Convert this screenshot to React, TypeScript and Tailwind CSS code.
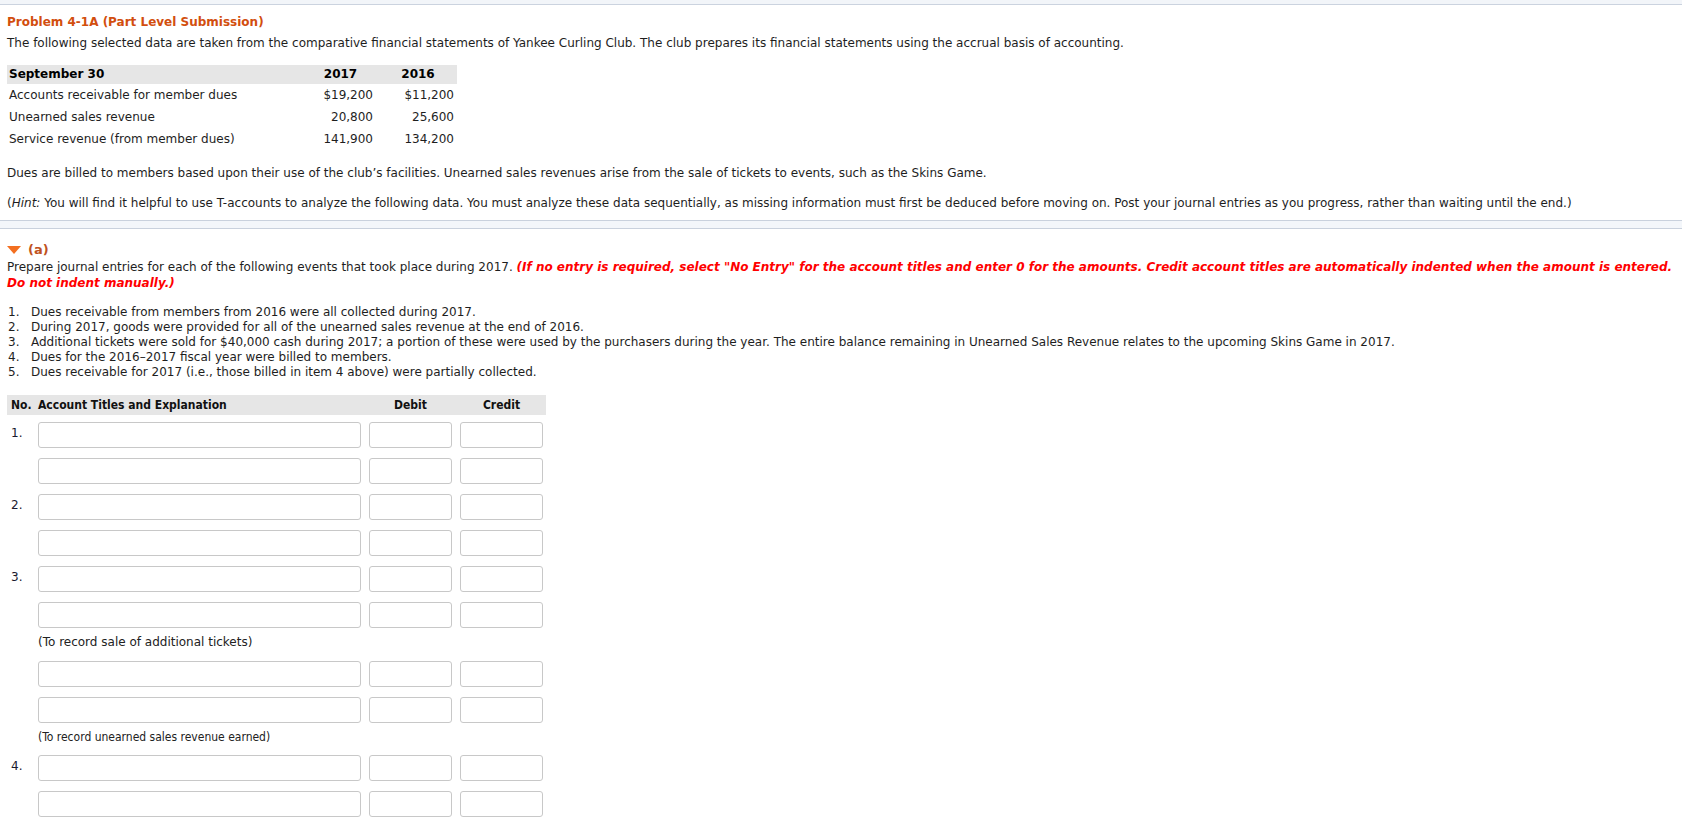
import React from "react";

const font = { fontFamily: '"DejaVu Sans", Verdana, sans-serif' };
const cond = { fontFamily: '"DejaVu Sans Condensed", "DejaVu Sans", sans-serif' };

function Row({ num }: { num?: string }) {
  return (
    <div className="flex h-[26px]">
      <div className="w-[31px] pl-[4px] pt-[3px] leading-[16px] text-[12px] text-[#1a1a2e]">{num}</div>
      <input className="w-[323px] h-[26px] border border-[#c8c8c8] rounded-[3px] bg-white outline-none" />
      <input className="ml-[8px] w-[83px] h-[26px] border border-[#c8c8c8] rounded-[3px] bg-white outline-none" />
      <input className="ml-[8px] w-[83px] h-[26px] border border-[#c8c8c8] rounded-[3px] bg-white outline-none" />
    </div>
  );
}

function Label({ children }: { children: React.ReactNode }) {
  return (
    <div className="pl-[31px] leading-[16px] text-[12px] text-[#222]">{children}</div>
  );
}

export default function App() {
  const data = [
    ["Accounts receivable for member dues", "$19,200", "$11,200"],
    ["Unearned sales revenue", "20,800", "25,600"],
    ["Service revenue (from member dues)", "141,900", "134,200"],
  ];
  const items = [
    "Dues receivable from members from 2016 were all collected during 2017.",
    "During 2017, goods were provided for all of the unearned sales revenue at the end of 2016.",
    "Additional tickets were sold for $40,000 cash during 2017; a portion of these were used by the purchasers during the year. The entire balance remaining in Unearned Sales Revenue relates to the upcoming Skins Game in 2017.",
    "Dues for the 2016\u20132017 fiscal year were billed to members.",
    "Dues receivable for 2017 (i.e., those billed in item 4 above) were partially collected.",
  ];
  return (
    <div className="bg-white min-h-screen text-[12px] text-[#1e1e1e]" style={font}>
      <div className="h-[5px] bg-[#f2f5f9] border-b border-[#cbd3df]" />
      <div className="px-[7px]">
        <div className="mt-[9px] leading-[16px] font-bold text-[#d24e0e]">
          Problem 4-1A (Part Level Submission)
        </div>
        <div className="mt-[5px] leading-[16px]">
          The following selected data are taken from the comparative financial statements of Yankee Curling Club. The club prepares its financial statements using the accrual basis of accounting.
        </div>
        <div className="mt-[14px] w-[450px]">
          <div className="grid grid-cols-[295px_77px_78px] h-[19px] bg-[#e6e6e6] font-bold text-[#000] leading-[19px]">
            <div className="pl-[2px]">September 30</div>
            <div className="text-center">2017</div>
            <div className="text-center">2016</div>
          </div>
          {data.map((r) => (
            <div key={r[0]} className="grid grid-cols-[295px_77px_78px] h-[22px] leading-[22px]">
              <div className="pl-[2px]">{r[0]}</div>
              <div className="text-right pr-[6px]">{r[1]}</div>
              <div className="text-right pr-[3px]">{r[2]}</div>
            </div>
          ))}
        </div>
        <div className="mt-[15px] leading-[16px]">
          Dues are billed to members based upon their use of the club’s facilities. Unearned sales revenues arise from the sale of tickets to events, such as the Skins Game.
        </div>
        <div className="mt-[14px] leading-[16px]">
          (<i>Hint:</i> You will find it helpful to use T-accounts to analyze the following data. You must analyze these data sequentially, as missing information must first be deduced before moving on. Post your journal entries as you progress, rather than waiting until the end.)
        </div>
      </div>
      <div className="mt-[9px] h-[9px] bg-[#f3f6fa] border-y border-[#c9d1dd]" />
      <div className="px-[7px]">
        <div className="mt-[13px] flex items-center h-[16px] leading-[16px]">
          <svg width="14" height="8" viewBox="0 0 14 8" className="mr-[7px]">
            <polygon points="0,0 14,0 7,8" fill="#f36f21" />
          </svg>
          <span className="font-bold text-[13px] text-[#c0521e]">(a)</span>
        </div>
        <div className="mt-[1px] leading-[16px]">
          Prepare journal entries for each of the following events that took place during 2017.{" "}
          <b className="italic text-[#ff0000]">
            (If no entry is required, select "No Entry" for the account titles and enter 0 for the amounts. Credit account titles are automatically indented when the amount is entered. Do not indent manually.)
          </b>
        </div>
        <div className="mt-[14px]">
          {items.map((t, i) => (
            <div key={i} className="flex leading-[15px]">
              <span className="w-[23px] ml-[1px] shrink-0">{i + 1}.</span>
              <span>{t}</span>
            </div>
          ))}
        </div>
        <div
          className="mt-[15px] w-[539px] h-[20px] flex items-center bg-[#e6e6e6] font-bold text-[#111]"
          style={cond}
        >
          <div className="w-[31px] pl-[4px]">No.</div>
          <div className="w-[331px]">Account Titles and Explanation</div>
          <div className="w-[83px] text-center">Debit</div>
          <div className="w-[8px]" />
          <div className="w-[83px] text-center">Credit</div>
        </div>
        <div className="mt-[7px] flex flex-col">
          <Row num="1." />
          <div className="h-[10px]" />
          <Row />
          <div className="h-[10px]" />
          <Row num="2." />
          <div className="h-[10px]" />
          <Row />
          <div className="h-[10px]" />
          <Row num="3." />
          <div className="h-[10px]" />
          <Row />
          <div className="h-[6px]" />
          <Label>(To record sale of additional tickets)</Label>
          <div className="h-[11px]" />
          <Row />
          <div className="h-[10px]" />
          <Row />
          <div className="h-[6px]" />
          <div style={cond}>
            <Label>(To record unearned sales revenue earned)</Label>
          </div>
          <div className="h-[10px]" />
          <Row num="4." />
          <div className="h-[10px]" />
          <Row />
          <div className="h-[30px]" />
        </div>
      </div>
    </div>
  );
}
